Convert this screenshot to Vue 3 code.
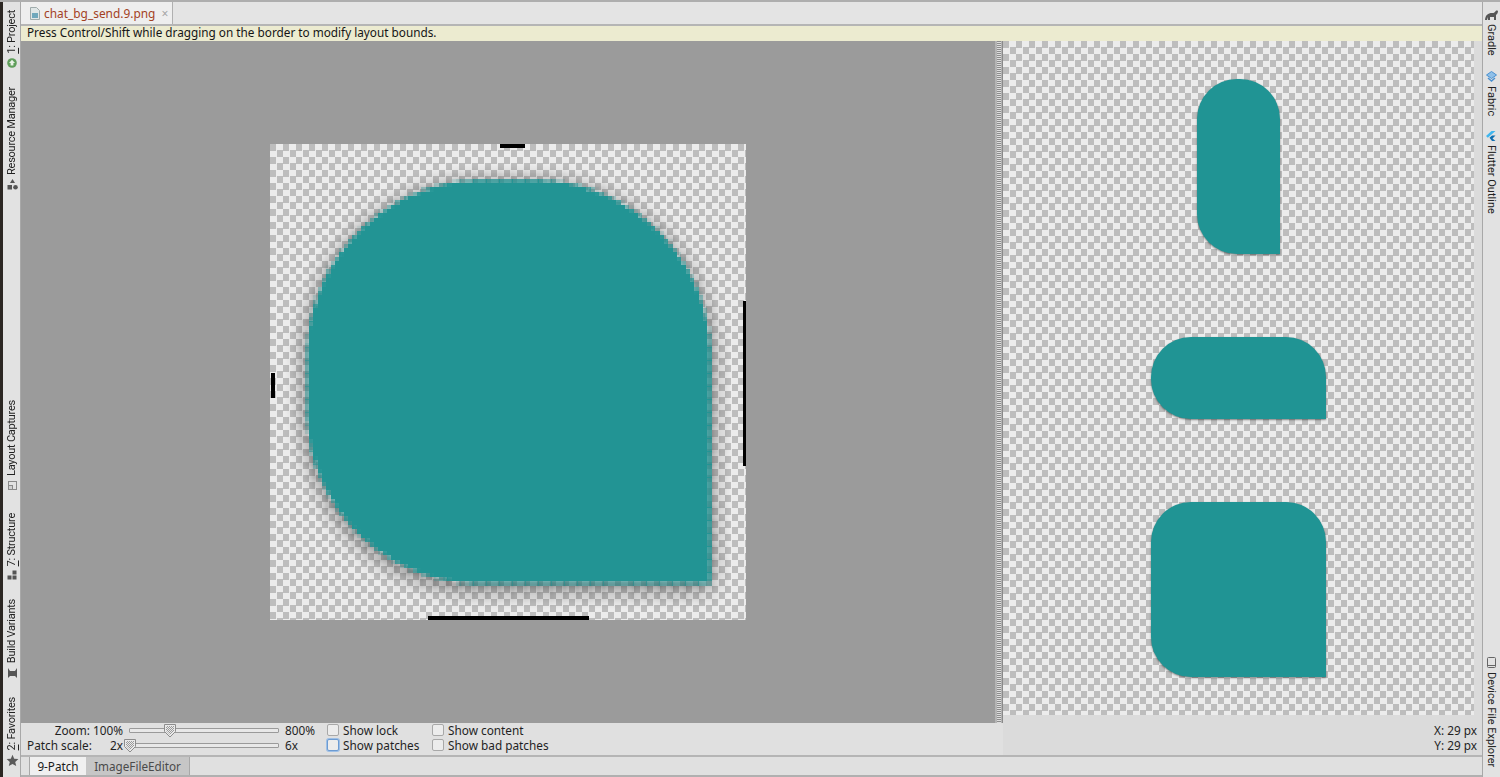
<script setup>
const N = 110
const PX = 476 / N
const TEAL = 'rgb(32,148,148)'
function inside(x, y) {
  const l = 37, r = 440, t = 36, b = 439, R = 176, B = 172
  if (x < l || x > r || y < t || y > b) return false
  const corner = (cx, cy, rad) => (x - cx) ** 2 + (y - cy) ** 2 <= rad * rad
  if (x < l + R && y < t + R) return corner(l + R, t + R, R)
  if (x > r - R && y < t + R) return corner(r - R, t + R, R)
  if (x < l + B && y > b - B) return corner(l + B, b - B, B)
  return true
}
const mask = []
for (let j = 0; j < N; j++) {
  const row = []
  for (let i = 0; i < N; i++) {
    let c = 0
    for (let a = 0; a < 4; a++) for (let d = 0; d < 4; d++) {
      if (inside((i + (a + 0.5) / 4) * PX, (j + (d + 0.5) / 4) * PX)) c++
    }
    row.push(c / 16)
  }
  mask.push(row)
}
function blur(src, rad) {
  const h = src.map(row => row.map((_, i) => {
    let s = 0
    for (let k = -rad; k <= rad; k++) s += row[Math.min(N - 1, Math.max(0, i + k))]
    return s / (2 * rad + 1)
  }))
  return h.map((row, j) => row.map((_, i) => {
    let s = 0
    for (let k = -rad; k <= rad; k++) s += h[Math.min(N - 1, Math.max(0, j + k))][i]
    return s / (2 * rad + 1)
  }))
}
const shadow = blur(blur(mask, 3), 2)
const shadowRects = []
const tealRects = []
for (let j = 0; j < N; j++) {
  for (let i = 0; i < N; i++) {
    const a = shadow[Math.max(0, j - 1)][i] * 0.45
    if (a > 0.01 && mask[j][i] < 1) shadowRects.push({ x: i * PX, y: j * PX, a: a.toFixed(3) })
    if (mask[j][i] > 0) tealRects.push({ x: i * PX, y: j * PX, a: mask[j][i] })
  }
}
const leftTop = [
  { label: '1: Project', icon: 'android' },
  { label: 'Resource Manager', icon: 'shapes' },
]
const leftBottom = [
  { label: 'Layout Captures', icon: 'capture' },
  { label: '7: Structure', icon: 'structure' },
  { label: 'Build Variants', icon: 'variants' },
  { label: '2: Favorites', icon: 'star' },
]
</script>

<template>
  <div class="ide">
    <aside class="rail rail-left">
      <div class="rail-group">
        <div v-for="it in leftTop" :key="it.label" class="lr-item">
          <svg v-if="it.icon === 'android'" width="10" height="10" viewBox="0 0 10 10"><circle cx="5" cy="5" r="4.8" fill="#5f9e5a"/><path d="M5 1.8 8 5H6.4v2.6H3.6V5H2z" fill="#e8f2e6"/></svg>
          <svg v-else width="11" height="11" viewBox="0 0 11 11"><path d="M5.500 0 8 4H3z" fill="#555"/><rect x="0.5" y="6" width="4.5" height="4.5" fill="#555"/><circle cx="8.5" cy="8.2" r="2.3" fill="#555"/></svg>
          <span class="vtext"><u v-if="it.label[1] === ':'">{{ it.label[0] }}</u><template v-if="it.label[1] === ':'">{{ it.label.slice(1) }}</template><template v-else>{{ it.label }}</template></span>
        </div>
      </div>
      <div class="rail-group rail-bottom">
        <div v-for="it in leftBottom" :key="it.label" class="lr-item">
          <svg v-if="it.icon === 'capture'" width="11" height="11" viewBox="0 0 11 11" fill="none" stroke="#8a8a8a"><rect x="1.5" y="1.5" width="8" height="8"/><rect x="1.5" y="5.5" width="4" height="4" fill="#d0d0d0"/></svg>
          <svg v-else-if="it.icon === 'structure'" width="10" height="10" viewBox="0 0 10 10"><rect x="5.5" y="0.5" width="4" height="4" fill="#555"/><rect x="0.5" y="5.5" width="4" height="4" fill="#555"/><rect x="5.5" y="5.5" width="4" height="4" fill="#555"/></svg>
          <svg v-else-if="it.icon === 'variants'" width="11" height="10" viewBox="0 0 11 10"><path d="M1 0l2 3h5l2-3v10l-2-2H3l-2 2z" fill="#555"/></svg>
          <svg v-else width="13" height="13" viewBox="0 0 13 13"><path d="M6.500.8 8.200 4.700l4.200.4-3.200 2.800 1 4.200-3.700-2.200-3.700 2.200 1-4.200L.6 5.100l4.200-.4z" fill="#5a5a5a"/></svg>
          <span class="vtext"><u v-if="it.label[1] === ':'">{{ it.label[0] }}</u><template v-if="it.label[1] === ':'">{{ it.label.slice(1) }}</template><template v-else>{{ it.label }}</template></span>
        </div>
      </div>
    </aside>

    <main class="main">
      <div class="tabbar">
        <div class="filetab">
          <svg class="fileicon" width="10" height="13" viewBox="0 0 10 13"><path d="M.5.500h6l3 3v9H.500z" fill="#dfe6e6" stroke="#9fabab"/><rect x="2" y="6" width="6" height="5" fill="#6fa8bc"/></svg>
          <span class="filename">chat_bg_send.9.png</span>
          <span class="close">×</span>
        </div>
      </div>
      <div class="hint">Press Control/Shift while dragging on the border to modify layout bounds.</div>

      <div class="workspace">
        <div class="editor-col">
          <div class="canvas">
            <svg class="patch" width="476" height="476" viewBox="0 0 476 476">
              <defs>
                <filter id="soft" filterUnits="userSpaceOnUse" x="0" y="0" width="476" height="476"><feGaussianBlur stdDeviation="1.5"/></filter>
                <filter id="edge" filterUnits="userSpaceOnUse" x="0" y="0" width="476" height="476"><feGaussianBlur stdDeviation="0.4"/></filter>
              </defs>
              <g filter="url(#soft)" shape-rendering="crispEdges">
                <rect v-for="(r, i) in shadowRects" :key="'s' + i" :x="r.x" :y="r.y" :width="PX + 0.3" :height="PX + 0.3" fill="#000" :fill-opacity="r.a"/>
              </g>
              <g filter="url(#edge)" shape-rendering="crispEdges">
                <rect v-for="(r, i) in tealRects" :key="'t' + i" :x="r.x" :y="r.y" :width="PX + 0.3" :height="PX + 0.3" :fill="TEAL" :fill-opacity="r.a"/>
              </g>
              <rect x="230" y="0" width="25" height="4" fill="#000"/>
              <rect x="1" y="229" width="4" height="25" fill="#000"/>
              <rect x="473" y="157" width="4" height="165" fill="#000"/>
              <rect x="158" y="472" width="161" height="4" fill="#000"/>
            </svg>
          </div>
          <div class="controls">
            <span class="lab-cell end-cell">Zoom: 100%</span>
            <div class="slider">
              <svg class="thumb thumb-zoom" width="16" height="16" viewBox="0 0 16 16"><defs><pattern id="dots" width="2" height="2" patternUnits="userSpaceOnUse"><rect width="1" height="1" fill="#9a9a9a"/><rect x="1" y="1" width="1" height="1" fill="#9a9a9a"/></pattern></defs><path d="M2.500 1.500h11v7L8 14 2.500 8.500z" fill="#e9e9e9" stroke="#8c8c8c"/><path d="M4 3h8v5l-4 4-4-4z" fill="url(#dots)"/></svg>
            </div>
            <span class="end">800%</span>
            <label class="chk"><span class="box"></span>Show lock</label>
            <label class="chk"><span class="box"></span>Show content</label>

            <span class="lab-cell"><span>Patch scale:</span><span>2x</span></span>
            <div class="slider">
              <svg class="thumb thumb-patch" width="16" height="16" viewBox="0 0 16 16"><path d="M2.500 1.500h11v7L8 14 2.500 8.500z" fill="#e9e9e9" stroke="#8c8c8c"/><path d="M4 3h8v5l-4 4-4-4z" fill="url(#dots)"/></svg>
            </div>
            <span class="end">6x</span>
            <label class="chk"><span class="box focus"></span>Show patches</label>
            <label class="chk"><span class="box"></span>Show bad patches</label>
          </div>
        </div>

        <div class="splitter"></div>

        <div class="preview-col">
          <div class="preview-wrap">
            <div class="preview">
              <div class="p-shape p1"></div>
              <div class="p-shape p2"></div>
              <div class="p-shape p3"></div>
            </div>
          </div>
          <div class="coords">
            <span>X: 29 px</span>
            <span>Y: 29 px</span>
          </div>
        </div>
      </div>

      <div class="bottom-tabs">
        <span class="btab active">9-Patch</span>
        <span class="btab">ImageFileEditor</span>
      </div>
    </main>

    <aside class="rail rail-right">
      <div class="rr-item">
        <svg width="13" height="10" viewBox="0 0 13 10"><path d="M0 10C.5 5 3 3 7 3c1 0 2 0 3-1 .5-1 1.500-2 3-1 0 2-1 3-2 4v5H9V7H5v3H3V7L2 10z" fill="#555"/></svg>
        <span class="vtext-r">Gradle</span>
      </div>
      <div class="rr-item">
        <svg width="11" height="11" viewBox="0 0 11 11"><path d="M5.500.500 10.500 4 5.500 7.500.5 4z" fill="#8fc0e8" stroke="#4a90d0"/><path d="M2 7l3.500 3L9 7" fill="none" stroke="#4a90d0" stroke-width="1.500"/></svg>
        <span class="vtext-r">Fabric</span>
      </div>
      <div class="rr-item">
        <svg width="11" height="10" viewBox="0 0 11 10"><path d="M0 5 5.500 0h4L3.500 5.200 1.800 6.800z" fill="#3fb6ee"/><path d="M3.500 6.800 6 4.500h3.500L6.500 7.500 9.500 10H6z" fill="#0f6fb0"/></svg>
        <span class="vtext-r">Flutter Outline</span>
      </div>
      <div class="rr-item rr-bottom">
        <svg width="9" height="11" viewBox="0 0 9 11" fill="none" stroke="#666"><rect x="0.500" y="0.500" width="8" height="10" rx="1"/><path d="M1 8.500h7"/></svg>
        <span class="vtext-r">Device File Explorer</span>
      </div>
    </aside>
  </div>
</template>

<style scoped>
.ide {
  width: 1500px;
  height: 777px;
  display: flex;
  overflow: hidden;
  background: #e0e0e0;
  font-family: "Noto Sans", "Open Sans", sans-serif;
  font-size: 11.8px;
  color: #1f1f1f;
  border-top: 2px solid #aeaeae;
  box-sizing: border-box;
}
.rail {
  flex: none;
  display: flex;
  flex-direction: column;
  background: #e2e2e2;
  font-family: Roboto, "Noto Sans", sans-serif;
  font-size: 11px;
  color: #222;
}
.rail-left {
  width: 21px;
  box-sizing: border-box;
  border-left: 3px solid #2b2622;
  border-right: 1px solid #a8a8a8;
  padding: 8px 0 0 1px;
  letter-spacing: -0.25px;
}
.rail-group {
  display: flex;
  flex-direction: column;
  align-items: center;
  gap: 19px;
}
.rail-bottom {
  margin-top: auto;
  gap: 19px;
  padding-bottom: 10px;
}
.rail-bottom .lr-item:first-child {
  margin-bottom: 3px;
}
.lr-item {
  display: flex;
  flex-direction: column-reverse;
  align-items: center;
  gap: 4px;
}
.vtext {
  writing-mode: vertical-rl;
  transform: rotate(180deg);
  white-space: nowrap;
  line-height: 16px;
}
.rail-right {
  width: 18px;
  border-left: 1px solid #a8a8a8;
  box-sizing: border-box;
  align-items: center;
  padding: 8px 1px 0 0;
  gap: 15px;
}
.rr-item {
  display: flex;
  flex-direction: column;
  align-items: center;
  gap: 4px;
}
.rr-bottom {
  margin-top: auto;
  padding-bottom: 10px;
}
.vtext-r {
  writing-mode: vertical-rl;
  white-space: nowrap;
  line-height: 16px;
}
.main {
  flex: 1;
  min-width: 0;
  display: flex;
  flex-direction: column;
}
.tabbar {
  height: 24px;
  flex: none;
  box-sizing: border-box;
  border-bottom: 2px solid #b5b5b5;
  display: flex;
  background: #e4e4e4;
}
.filetab {
  width: 152px;
  height: 22px;
  box-sizing: border-box;
  padding-left: 9px;
  background: #eeeeee;
  border-right: 1px solid #b0b0b0;
  display: flex;
  align-items: center;
  gap: 4px;
}
.fileicon {
  flex: none;
}
.filename {
  color: #a3411f;
  font-size: 11.9px;
  white-space: nowrap;
}
.close {
  margin-left: 2px;
  color: #a5a5a5;
  font-size: 12px;
}
.hint {
  height: 15px;
  flex: none;
  background: #ecebd0;
  padding-left: 6px;
  font-size: 11.77px;
  line-height: 13px;
  color: #151515;
  white-space: nowrap;
}
.workspace {
  flex: 1;
  min-height: 0;
  display: flex;
}
.editor-col {
  width: 974px;
  flex: none;
  display: flex;
  flex-direction: column;
}
.canvas {
  flex: 1;
  min-height: 0;
  background: #9b9b9b;
  display: flex;
  align-items: center;
  justify-content: center;
}
.patch {
  display: block;
  background: conic-gradient(#ececec 25%, #bdbdbd 0 50%, #ececec 0 75%, #bdbdbd 0) 0 0 / 13px 13px;
}
.controls {
  height: 32px;
  flex: none;
  display: grid;
  grid-template-columns: 102px 150px 48px 105px 1fr;
  grid-auto-rows: 15px;
  align-items: center;
  padding-left: 6px;
  box-sizing: border-box;
  background: #e0e0e0;
  white-space: nowrap;
}
.lab-cell {
  display: flex;
  justify-content: space-between;
  padding: 0 6px 1px 0;
}
.end-cell {
  justify-content: flex-end;
}
.slider {
  height: 3px;
  border: 1px solid #9a9a9a;
  background: #e8e8e8;
  border-radius: 1px;
  position: relative;
}
.thumb {
  position: absolute;
  top: -6px;
}
.thumb-zoom {
  left: 32px;
}
.thumb-patch {
  left: -8px;
}
.end {
  padding: 0 0 1px 6px;
}
.chk {
  display: flex;
  align-items: center;
  gap: 4px;
  padding-bottom: 1px;
}
.box {
  width: 10px;
  height: 10px;
  border: 1px solid #a8a8a8;
  border-radius: 2px;
  background: #ececec;
  flex: none;
}
.box.focus {
  border-color: #6c9bd2;
  box-shadow: 0 0 0 1px #9dbfe6;
}
.splitter {
  width: 8px;
  flex: none;
  background: repeating-linear-gradient(#8c8c8c 0 1px, #dddddd 1px 2px);
  background-size: 4px 100%;
  background-repeat: no-repeat;
  background-position: 2px 0;
  background-color: #b4b4b4;
  border-right: 1px solid #8a8a8a;
  box-sizing: border-box;
  margin-bottom: 32px;
}
.preview-col {
  flex: 1;
  min-width: 0;
  display: flex;
  flex-direction: column;
  background: #dbdbdb;
}
.preview-wrap {
  height: 674px;
  flex: none;
  padding-right: 8px;
}
.preview {
  height: 100%;
  box-sizing: border-box;
  padding-top: 38px;
  display: flex;
  flex-direction: column;
  align-items: center;
  gap: 83px;
  background: conic-gradient(#ececec 25%, #bdbdbd 0 50%, #ececec 0 75%, #bdbdbd 0) 0 0 / 13px 13px;
}
.p-shape {
  background: rgb(32, 148, 148);
  border-radius: 40px 40px 0 40px;
  box-shadow: 0 1px 2px rgba(0, 0, 0, 0.45);
  flex: none;
}
.p1 { width: 83px; height: 175px; }
.p2 { width: 175px; height: 82px; }
.p3 { width: 175px; height: 175px; }
.coords {
  flex: 1;
  display: flex;
  flex-direction: column;
  align-items: flex-end;
  justify-content: flex-end;
  padding: 0 5px 2px 0;
  line-height: 15px;
}
.bottom-tabs {
  height: 22px;
  flex: none;
  box-sizing: border-box;
  border-top: 2px solid #b5b5b5;
  border-bottom: 2px solid #b0b0b0;
  padding-left: 8px;
  display: flex;
  background: #e0e0e0;
}
.btab {
  padding: 0 6px;
  width: 104px;
  box-sizing: border-box;
  background: #c6c6c6;
  color: #4a4a4a;
  font-size: 11.7px;
  line-height: 18px;
  text-align: center;
  border-right: 1px solid #a8a8a8;
}
.btab.active {
  width: 57px;
  background: #f0f0f0;
  color: #1a1a1a;
  border-left: 1px solid #a8a8a8;
  border-right: none;
}
</style>

<style>
html, body { margin: 0; padding: 0; background: #e0e0e0; }
</style>
